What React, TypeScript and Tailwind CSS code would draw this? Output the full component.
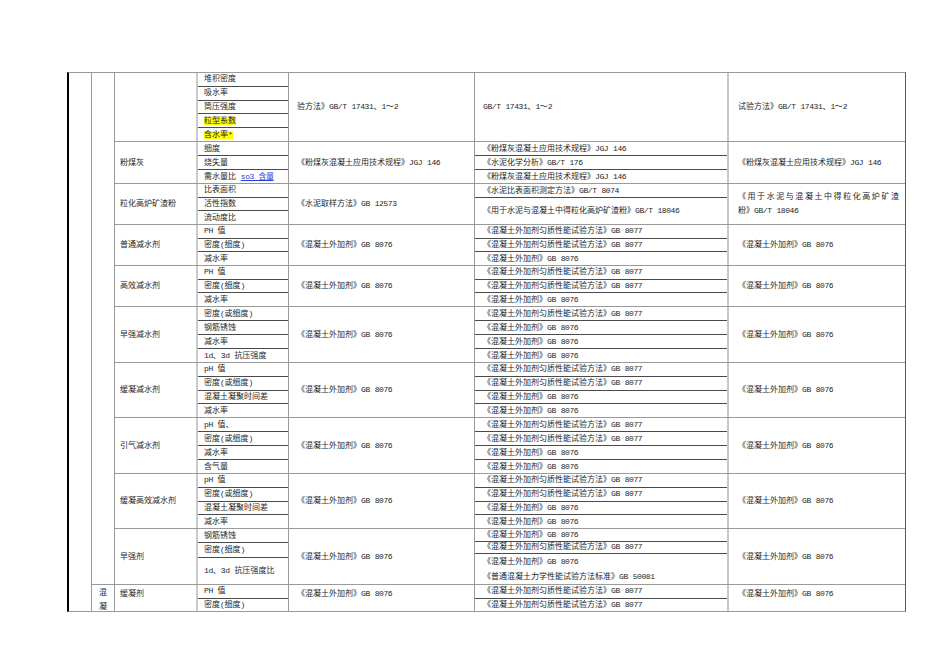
import type { ReactNode } from "react"

type Sub = { t: ReactNode; w?: number }

type Block = {
    name: string
    h: number
    items: Sub[]
    std1: ReactNode
    refs: Sub[]
    std2: ReactNode
    top?: boolean
    noLines?: boolean
}

const A = "《混凝土外加剂匀质性能试验方法》GB 8077"
const B = "《混凝土外加剂》GB 8076"
const JGJ = "《粉煤灰混凝土应用技术规程》JGJ 146"

// latin runs are narrower in the original (SimSun half-width), tighten them a bit
function fmt(t: ReactNode): ReactNode {
    if (typeof t !== "string") return t
    return (
        <span>
            {t.split(/([\x21-\x7e]+)/).map((part, i) =>
                /^[\x21-\x7e]+$/.test(part) ? (
                    <span key={i} className="tracking-[-0.4px]">
                        {part}
                    </span>
                ) : (
                    part
                )
            )}
        </span>
    )
}

const s = (...list: ReactNode[]): Sub[] => list.map((t) => ({ t }))

const blocks: Block[] = [
    {
        name: "",
        h: 68,
        items: s(
            "堆积密度",
            "吸水率",
            "筒压强度",
            <span className="bg-[#ffff00]">粒型系数</span>,
            <span className="bg-[#ffff00]">含水率*</span>
        ),
        std1: "验方法》GB/T 17431、1～2",
        refs: s("GB/T 17431、1～2"),
        std2: "试验方法》GB/T 17431、1～2",
        noLines: true,
    },
    {
        name: "粉煤灰",
        h: 42,
        items: s(
            "细度",
            "烧失量",
            <span>
                需水量比 <span className="text-[#2b3fd6] underline tracking-[-0.4px]">so3 含量</span>
            </span>
        ),
        std1: JGJ,
        refs: s(JGJ, "《水泥化学分析》GB/T 176", JGJ),
        std2: JGJ,
    },
    {
        name: "粒化高炉矿渣粉",
        h: 41,
        items: s("比表面积", "活性指数", "流动度比"),
        std1: "《水泥取样方法》GB 12573",
        refs: [
            { t: "《水泥比表面积测定方法》GB/T 8074", w: 1 },
            { t: "《用于水泥与混凝土中得粒化高炉矿渣粉》GB/T 18046", w: 2 },
        ],
        std2: (
            <div className="w-full pr-[6px] leading-[14px]">
                <div className="[text-align-last:justify]">《用于水泥与混凝土中得粒化高炉矿渣</div>
                <div>粉》{fmt("GB/T 18046")}</div>
            </div>
        ),
    },
    {
        name: "普通减水剂",
        h: 41,
        items: s("PH 值", "密度(细度)", "减水率"),
        std1: B,
        refs: s(A, A, B),
        std2: B,
    },
    {
        name: "高效减水剂",
        h: 41,
        items: s("PH 值", "密度(细度)", "减水率"),
        std1: B,
        refs: s(A, A, B),
        std2: B,
    },
    {
        name: "早强减水剂",
        h: 56,
        items: s("密度(或细度)", "钢筋锈蚀", "减水率", "1d、3d 抗压强度"),
        std1: B,
        refs: s(A, B, B, B),
        std2: B,
    },
    {
        name: "缓凝减水剂",
        h: 55,
        items: s("pH 值", "密度(或细度)", "混凝土凝聚时间差", "减水率"),
        std1: B,
        refs: s(A, A, B, B),
        std2: B,
    },
    {
        name: "引气减水剂",
        h: 56,
        items: s("pH 值、", "密度(或细度)", "减水率", "含气量"),
        std1: B,
        refs: s(A, A, B, B),
        std2: B,
    },
    {
        name: "缓凝高效减水剂",
        h: 55,
        items: s("pH 值", "密度(或细度)", "混凝土凝聚时间差", "减水率"),
        std1: B,
        refs: s(A, A, B, B),
        std2: B,
    },
    {
        name: "早强剂",
        h: 56,
        items: [
            { t: "钢筋锈蚀", w: 1 },
            { t: "密度(细度)", w: 1 },
            { t: "1d、3d 抗压强度比", w: 2 },
        ],
        std1: B,
        refs: [
            { t: B, w: 1 },
            { t: A, w: 1 },
            {
                t: (
                    <div className="leading-[15px]">
                        <div>{fmt(B)}</div>
                        <div>{fmt("《普通混凝土力学性能试验方法标准》GB 50081")}</div>
                    </div>
                ),
                w: 2,
            },
        ],
        std2: B,
    },
    {
        name: "缓凝剂",
        h: 27,
        items: s("PH 值", "密度(细度)"),
        std1: B,
        refs: s(A, A),
        std2: B,
        top: true,
    },
]

function SubCol({ list, pad, noLines }: { list: Sub[]; pad: string; noLines?: boolean }) {
    return (
        <div className="flex flex-col h-full">
            {list.map((sub, i) => (
                <div
                    key={i}
                    style={{ flexGrow: sub.w ?? 1, flexBasis: 0 }}
                    className={`flex items-center whitespace-pre ${pad} ${i > 0 && !noLines ? "border-t border-[#4a4a4a]" : ""}`}
                >
                    {fmt(sub.t)}
                </div>
            ))}
        </div>
    )
}

export default function App() {
    return (
        <div className="min-h-[672px] bg-white pt-[72px] pl-[67px] font-['Liberation_Mono','Noto_Sans_CJK_SC',monospace] text-[8px] leading-none text-[#262626]">
            <div className="flex w-[839px] border-l-2 border-l-black border-r border-r-[#555] border-t border-t-[#9a9a9a] border-b border-b-[#9a9a9a]">
                <div className="w-[23px] border-r border-[#9a9a9a]" />
                <div className="w-[23px] border-r border-[#9a9a9a] flex flex-col">
                    <div className="flex-1" />
                    <div className="h-[27px] border-t border-[#9a9a9a] flex flex-col items-center pt-[4px] gap-[6px]">
                        <span>混</span>
                        <span>凝</span>
                    </div>
                </div>
                <div className="flex-1 flex flex-col">
                    {blocks.map((b, i) => (
                        <div
                            key={i}
                            style={{ height: b.h }}
                            className={`flex ${i > 0 ? "border-t border-[#9a9a9a]" : ""}`}
                        >
                            <div className={`w-[83px] border-r-2 border-[#c9c9c9] pl-[5px] flex ${b.top ? "items-start pt-[5px]" : "items-center"}`}>
                                {b.name}
                            </div>
                            <div className="w-[91px] border-r border-[#9a9a9a]">
                                <SubCol list={b.items} pad="pl-[6px]" />
                            </div>
                            <div className={`w-[186px] border-r border-[#9a9a9a] pl-[8px] flex whitespace-pre ${b.top ? "items-start pt-[5px]" : "items-center"}`}>
                                {fmt(b.std1)}
                            </div>
                            <div className="w-[254px] border-r-2 border-[#c9c9c9]">
                                <SubCol list={b.refs} pad="pl-[8px]" noLines={b.noLines} />
                            </div>
                            <div className={`flex-1 pl-[9px] flex whitespace-pre ${b.top ? "items-start pt-[5px]" : "items-center"}`}>
                                {fmt(b.std2)}
                            </div>
                        </div>
                    ))}
                </div>
            </div>
        </div>
    )
}
